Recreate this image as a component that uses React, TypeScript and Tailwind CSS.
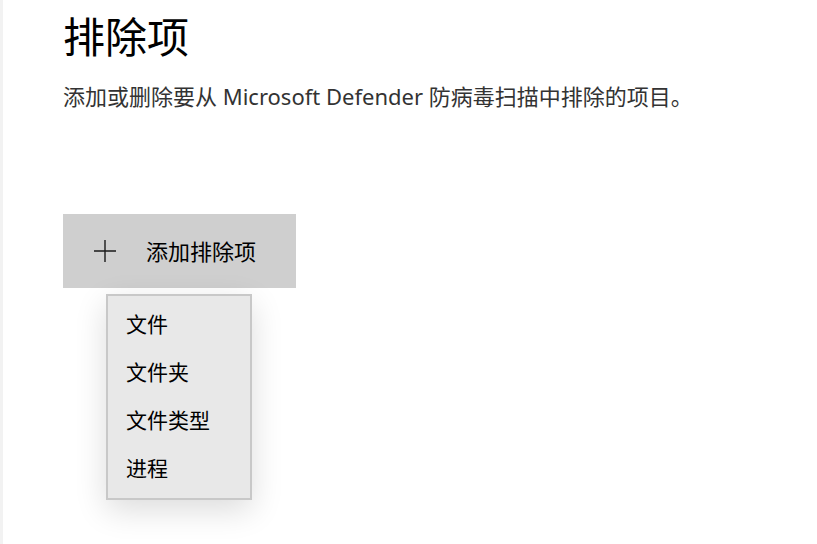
import React from "react";

const font = { fontFamily: '"Segoe UI", "Noto Sans", "Noto Sans CJK SC", sans-serif' };

export default function App() {
  return (
    <div className="w-[817px] h-[544px] bg-white flex overflow-hidden" style={font}>
      <div className="w-[3px] h-full bg-[#f2f2f2]" />
      <div className="flex-1 pl-[60px] flex flex-col">
        <h1 className="mt-[8px] text-[42px] leading-[58px] text-black font-normal">排除项</h1>
        <p className="mt-[15px] text-[22px] leading-[30px] text-[#333]">
          添加或删除要从 Microsoft Defender 防病毒扫描中排除的项目。
        </p>
        <div className="relative mt-[103px] w-[233px]">
          <button className="w-[233px] h-[74px] bg-[#cfcfcf] flex items-center pl-[30px] text-black">
            <svg width="24" height="24" viewBox="0 0 24 24" className="shrink-0">
              <path d="M12 1 V23 M1 12 H23" stroke="#1a1a1a" strokeWidth="1.4" fill="none" />
            </svg>
            <span className="ml-[29px] text-[22px] leading-[30px]">添加排除项</span>
          </button>
          <div className="absolute left-[43px] top-[80px] w-[146px] bg-[#e8e8e8] border-2 border-[#c8c8c8] shadow-[0_10px_30px_rgba(0,0,0,0.14)] py-[5px] flex flex-col">
            {["文件", "文件夹", "文件类型", "进程"].map((t) => (
              <div key={t} className="h-[48px] shrink-0 flex items-center pl-[18px] text-[21px] text-black">
                {t}
              </div>
            ))}
          </div>
        </div>
      </div>
    </div>
  );
}
